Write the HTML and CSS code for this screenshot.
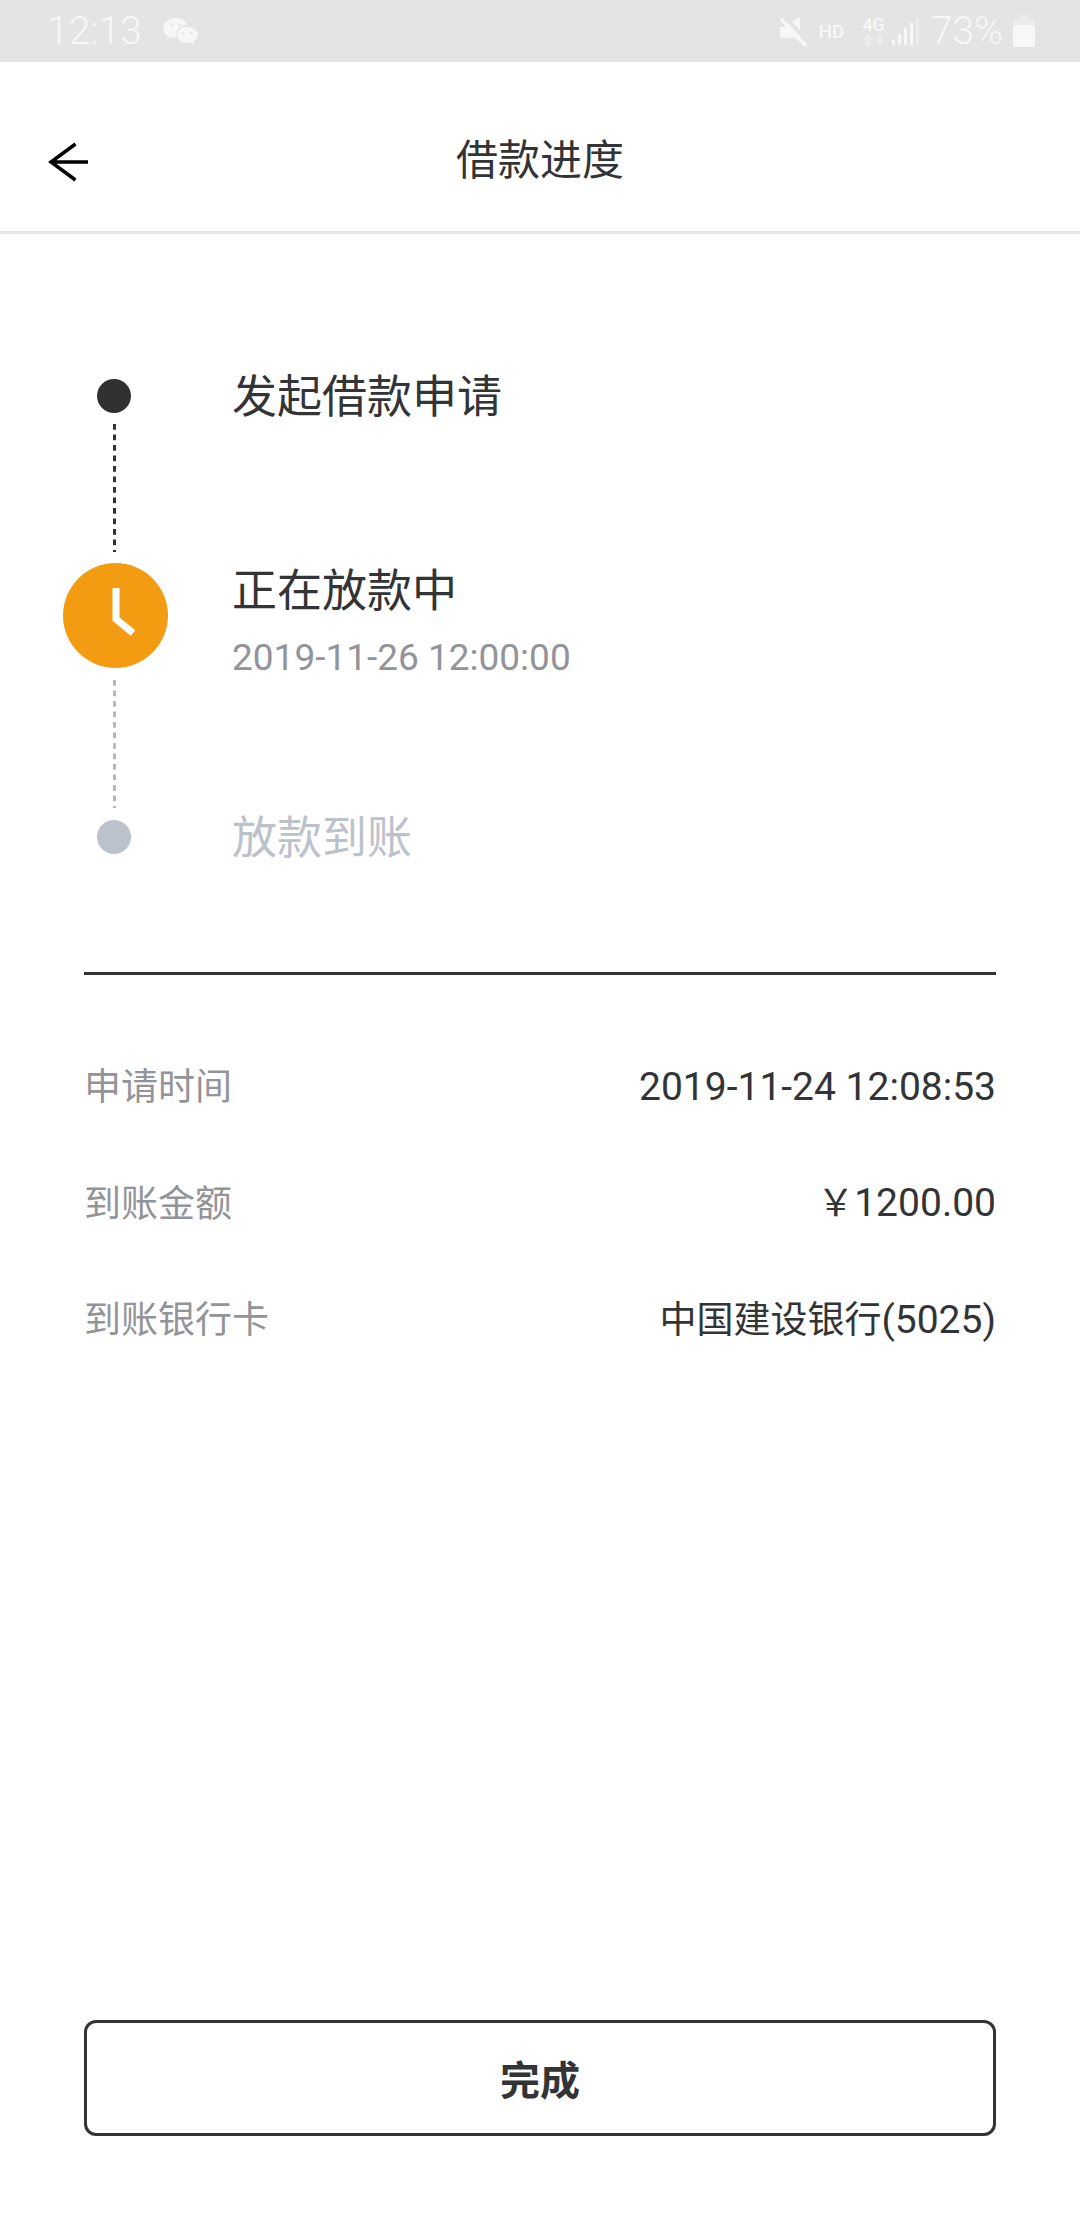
FILE: index.html
```html
<!DOCTYPE html>
<html lang="zh-CN">
<head>
    <meta charset="UTF-8">
    <meta name="viewport" content="width=device-width, initial-scale=1.0">
    <title>借款进度</title>
    <link rel="stylesheet" href="styles.css">
</head>
<body>
<div class="page">
    <div class="statusbar">
        <div class="status-left">
            <span class="clock-text">12:13</span>
            <!-- wechat notification -->
            <svg class="ic-wechat" width="35" height="29" viewBox="0 0 36 30">
                <path fill="#f7f7f7" d="M13 1C6 1 0 5.600 0 11.400c0 3.300 2 6.200 5 8l-1.200 3.800 4.400-2.400c1.600.4 3.200.6 4.800.6h1.200c-.5-1.200-.7-2.400-.7-3.600 0-5.400 5-9.600 11.200-9.800C24.100 4.200 19 1 13 1z"/>
                <path fill="#f7f7f7" d="M25 10c-5.800 0-10.400 3.800-10.400 8.500S19.200 27 25 27c1.300 0 2.500-.2 3.600-.5l3.400 2-.9-3.100c2.900-1.600 4.900-4 4.900-6.900C36 13.800 30.800 10 25 10z"/>
                <circle cx="8.500" cy="8" r="1.600" fill="#e4e4e4"/>
                <circle cx="17" cy="8" r="1.600" fill="#e4e4e4"/>
                <circle cx="21" cy="16.500" r="1.400" fill="#e4e4e4"/>
                <circle cx="29" cy="16.500" r="1.400" fill="#e4e4e4"/>
            </svg>
        </div>
        <div class="status-right">
            <!-- muted speaker -->
            <svg width="29" height="31" viewBox="0 0 29 31">
                <path fill="#f7f7f7" d="M1 11h6l3-3 11 12v5l-6-3H1zM13 6l8-5v13z"/>
                <path stroke="#f7f7f7" stroke-width="3.500" fill="none" d="M2 3l25 27"/>
            </svg>
            <span class="hd">HD</span>
            <div class="net">
                <span class="net-label">4G</span>
                <svg width="22" height="12" viewBox="0 0 22 12">
                    <path fill="#ececec" d="M5 0l5 6H7v6H3V6H0zM17 12l-5-6h3V0h4v6h3z"/>
                </svg>
            </div>
            <svg class="ic-signal" width="27" height="28" viewBox="0 0 27 28">
                <rect x="0" y="23" width="3" height="5" fill="#f7f7f7"/>
                <rect x="6" y="17" width="3" height="11" fill="#f7f7f7"/>
                <rect x="12" y="11" width="3" height="17" fill="#f7f7f7"/>
                <rect x="18" y="6" width="3" height="22" fill="#f7f7f7"/>
                <rect x="24" y="0" width="3" height="28" fill="#ebebeb"/>
            </svg>
            <span class="battery-text">73%</span>
            <svg width="22" height="32" viewBox="0 0 22 32">
                <rect x="6" y="0" width="10" height="4" fill="#ebebeb"/>
                <rect x="0" y="4" width="22" height="6" fill="#ebebeb"/>
                <rect x="0" y="10" width="22" height="22" rx="1" fill="#f7f7f7"/>
            </svg>
        </div>
    </div>

    <div class="header">
        <svg class="back" width="42" height="40" viewBox="0 0 42 40">
            <path d="M41 20H4M28.500 2L4 20l24.500 18" fill="none" stroke="#000" stroke-width="3.500"/>
        </svg>
        <h1 class="title">借款进度</h1>
    </div>

    <div class="timeline">
        <div class="node"><span class="dot dot-done"></span></div>
        <div class="step-text step-first">发起借款申请</div>

        <div class="line line-done"></div>
        <div></div>

        <div class="node">
            <svg class="clock" width="105" height="105" viewBox="0 0 105 105">
                <circle cx="52.500" cy="52.500" r="52.500" fill="#f39c12"/>
                <path d="M53 25v31l17 14" fill="none" stroke="#fff" stroke-width="7"/>
            </svg>
        </div>
        <div class="step-text step-active">
            <div>正在放款中</div>
            <div class="step-time">2019-11-26 12:00:00</div>
        </div>

        <div class="line line-todo"></div>
        <div></div>

        <div class="node"><span class="dot dot-todo"></span></div>
        <div class="step-text step-last">放款到账</div>
    </div>

    <div class="details">
        <div class="row"><span class="row-label">申请时间</span><span class="row-value">2019-11-24 12:08:53</span></div>
        <div class="row"><span class="row-label">到账金额</span><span class="row-value"><span class="cjk">￥</span>1200.00</span></div>
        <div class="row"><span class="row-label">到账银行卡</span><span class="row-value"><span class="cjk">中国建设银行</span>(5025)</span></div>
    </div>

    <div class="footer">
        <button class="done-btn" type="button">完成</button>
    </div>
</div>
</body>
</html>
```

FILE: styles.css
```css
* {
    box-sizing: border-box;
}
html, body {
    margin: 0;
    padding: 0;
    background-color: #fff;
}
body {
    font-family: Roboto, "Noto Sans CJK SC", sans-serif;
    color: #323436;
}
.page {
    width: 1080px;
    height: 2220px;
    display: flex;
    flex-direction: column;
}

/* status bar */
.statusbar {
    height: 62px;
    background-color: #e4e4e4;
    color: #f7f7f7;
    display: flex;
    justify-content: space-between;
    align-items: center;
    padding: 0 45px 0 47px;
}
.status-left, .status-right {
    display: flex;
    align-items: center;
}
.clock-text {
    font-size: 39px;
    font-weight: 300;
}
.ic-wechat {
    margin-left: 21px;
}
.hd {
    font-size: 19px;
    font-weight: 500;
    margin-left: 11px;
}
.net {
    display: flex;
    flex-direction: column;
    align-items: center;
    margin-left: 18px;
}
.net-label {
    font-size: 18px;
    font-weight: 500;
    line-height: 18px;
}
.ic-signal {
    margin-left: 7px;
}
.battery-text {
    font-size: 39px;
    font-weight: 300;
    margin: 0 10px 0 12px;
}

/* header */
.header {
    height: 172px;
    padding-top: 19px;
    border-bottom: 3px solid #e4e4e4;
    position: relative;
    display: flex;
    align-items: center;
    justify-content: center;
}
.back {
    position: absolute;
    left: 47px;
    top: 80px;
}
.title {
    margin: 0;
    font-size: 42px;
    font-weight: 400;
}

/* progress steps */
.timeline {
    display: grid;
    grid-template-columns: 105px 1fr;
    grid-template-rows: 34px 150px 105px 152px 34px;
    column-gap: 64px;
    height: 738px;
    padding: 145px 84px 0 63px;
}
.node {
    display: flex;
    align-items: center;
    justify-content: center;
}
.dot {
    width: 34px;
    height: 34px;
    margin-right: 3px;
    border-radius: 50%;
    display: block;
}
.dot-done {
    background-color: #2f3133;
}
.dot-todo {
    background-color: #bcc2cb;
}
.line {
    width: 3px;
    height: 128px;
    margin-right: 2px;
    justify-self: center;
    background-repeat: repeat-y;
    background-size: 3px 10.500px;
}
.line-done {
    margin-top: 11px;
    background-image: linear-gradient(#2f3133 50%, transparent 50%);
}
.line-todo {
    margin-top: 12px;
    background-image: linear-gradient(#b5b7ba 50%, transparent 50%);
}
.clock {
    display: block;
}
.step-text {
    font-size: 45px;
    line-height: 60px;
}
.step-first {
    margin-top: -11px;
}
.step-active {
    margin-top: -1px;
}
.step-time {
    font-size: 37px;
    line-height: 48px;
    color: #929499;
    margin-top: 12px;
}
.step-last {
    margin-top: -11px;
    color: #bcc2cb;
}

/* application details */
.details {
    margin: 0 84px;
    border-top: 3px solid #323436;
    padding-top: 87px;
    display: flex;
    flex-direction: column;
    gap: 66.500px;
}
.row {
    display: flex;
    justify-content: space-between;
    align-items: center;
    height: 50px;
}
.row-label {
    font-size: 37px;
    line-height: 50px;
    margin-top: 2px;
    color: #929499;
}
.row-value {
    font-size: 39px;
    line-height: 50px;
}
.cjk {
    font-size: 37px;
}

/* bottom action */
.footer {
    margin-top: auto;
    padding: 0 84px 84px;
}
.done-btn {
    display: block;
    width: 100%;
    height: 116px;
    border: 3px solid #323436;
    border-radius: 12px;
    background-color: #fff;
    color: #323436;
    font-family: inherit;
    font-size: 40px;
    font-weight: 700;
}
```
